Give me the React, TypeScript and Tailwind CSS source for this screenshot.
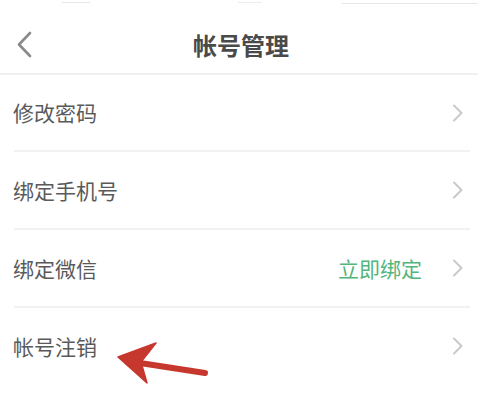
import React from "react";

const Chevron = () => (
  <svg width="12" height="18" viewBox="0 0 12 18" className="shrink-0">
    <path d="M2 1.5 L9.5 9 L2 16.5" fill="none" stroke="#c9c9c9" strokeWidth="2" strokeLinecap="round" strokeLinejoin="round" />
  </svg>
);

const Row = ({ label, extra, h }: { label: string; extra?: string; h: string }) => (
  <div className={`flex items-center pl-[13px] pr-[14px] ${h}`}>
    <span className="flex-1 text-[21px] text-[#5a5a5a] leading-none">{label}</span>
    {extra && <span className="text-[21px] text-[#52b57c] leading-none mr-[30px]">{extra}</span>}
    <Chevron />
  </div>
);

const Sep = () => <div className="h-[2px] bg-[#f1f1f1] ml-[14px] mr-[8px]" />;

export default function App() {
  return (
    <div
      className="relative w-[478px] h-[409px] bg-white overflow-hidden"
      style={{ fontFamily: '"Noto Sans CJK SC", "Noto Sans", sans-serif' }}
    >
      <div className="h-[75px] border-b-2 border-[#f0f0f0] flex flex-col">
        <div className="flex h-[6px] items-start pt-[2px]">
          <div className="ml-[62px] w-[28px] h-[1px] bg-[#e6e6e6]" />
          <div className="ml-[148px] w-[24px] h-[1px] bg-[#ededed]" />
          <div className="ml-[80px] flex-1 h-[1px] bg-[#e6e6e6] mt-[1px]" />
        </div>
        <div className="relative flex-1 flex items-center justify-center">
          <svg width="18" height="28" viewBox="0 0 18 28" className="absolute left-[16px] top-[25px]">
            <path d="M14 2 L3 13.5 L14 25" fill="none" stroke="#8a8a8a" strokeWidth="2.6" strokeLinecap="round" strokeLinejoin="round" />
          </svg>
          <span className="text-[24px] font-bold text-[#4a4a4a] leading-none mt-[10px] ml-[4px]">帐号管理</span>
        </div>
      </div>
      <Row label="修改密码" h="h-[75px]" />
      <Sep />
      <Row label="绑定手机号" h="h-[76px]" />
      <Sep />
      <Row label="绑定微信" extra="立即绑定" h="h-[76px]" />
      <Sep />
      <Row label="帐号注销" h="h-[76px]" />
      <svg className="absolute left-0 top-0 pointer-events-none" width="478" height="409" viewBox="0 0 478 409">
        <line x1="140" y1="363" x2="205" y2="373" stroke="#c6372d" strokeWidth="6" strokeLinecap="round" />
        <path d="M118 357 L156 343 L141 362 L147 383 Z" fill="#c6372d" stroke="#c6372d" strokeWidth="1.5" strokeLinejoin="round" />
      </svg>
    </div>
  );
}
